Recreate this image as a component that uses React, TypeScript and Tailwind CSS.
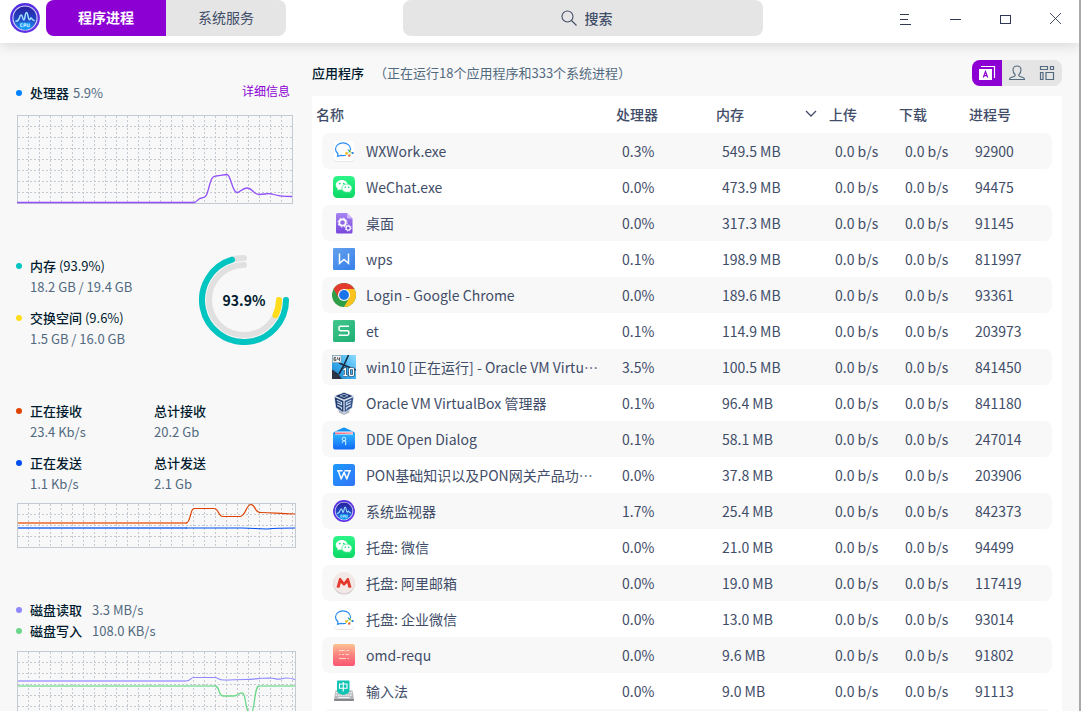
import React from "react";

type IconName =
  | "wxwork" | "wechat" | "desktop" | "wps" | "chrome" | "et" | "win10" | "vbox"
  | "dialog" | "word" | "monitor" | "mail" | "omd" | "ime";

interface Process {
  icon: IconName;
  name: string;
  clipped?: boolean;
  cpu: string;
  memory: string;
  pid: string;
}

const processes: Process[] = [
  { icon: "wxwork", name: "WXWork.exe", cpu: "0.3%", memory: "549.5 MB", pid: "92900" },
  { icon: "wechat", name: "WeChat.exe", cpu: "0.0%", memory: "473.9 MB", pid: "94475" },
  { icon: "desktop", name: "桌面", cpu: "0.0%", memory: "317.3 MB", pid: "91145" },
  { icon: "wps", name: "wps", cpu: "0.1%", memory: "198.9 MB", pid: "811997" },
  { icon: "chrome", name: "Login - Google Chrome", cpu: "0.0%", memory: "189.6 MB", pid: "93361" },
  { icon: "et", name: "et", cpu: "0.1%", memory: "114.9 MB", pid: "203973" },
  { icon: "win10", name: "win10 [正在运行] - Oracle VM Virtu", clipped: true, cpu: "3.5%", memory: "100.5 MB", pid: "841450" },
  { icon: "vbox", name: "Oracle VM VirtualBox 管理器", cpu: "0.1%", memory: "96.4 MB", pid: "841180" },
  { icon: "dialog", name: "DDE Open Dialog", cpu: "0.1%", memory: "58.1 MB", pid: "247014" },
  { icon: "word", name: "PON基础知识以及PON网关产品功", clipped: true, cpu: "0.0%", memory: "37.8 MB", pid: "203906" },
  { icon: "monitor", name: "系统监视器", cpu: "1.7%", memory: "25.4 MB", pid: "842373" },
  { icon: "wechat", name: "托盘: 微信", cpu: "0.0%", memory: "21.0 MB", pid: "94499" },
  { icon: "mail", name: "托盘: 阿里邮箱", cpu: "0.0%", memory: "19.0 MB", pid: "117419" },
  { icon: "wxwork", name: "托盘: 企业微信", cpu: "0.0%", memory: "13.0 MB", pid: "93014" },
  { icon: "omd", name: "omd-requ", cpu: "0.0%", memory: "9.6 MB", pid: "91802" },
  { icon: "ime", name: "输入法", cpu: "0.0%", memory: "9.0 MB", pid: "91113" },
];

function MonitorLogo({ className }: { className: string }) {
  return (
    <svg viewBox="0 0 30 30" className={className} aria-hidden="true">
      <defs>
        <linearGradient id="monitorRing" x2="1" y2="1">
          <stop stopColor="#4a2be0" />
          <stop offset="1" stopColor="#6a35e6" />
        </linearGradient>
        <linearGradient id="monitorFace" x2="0" y2="1">
          <stop stopColor="#2a22a0" />
          <stop offset="0.500" stopColor="#2440c0" />
          <stop offset="1" stopColor="#1f8df0" />
        </linearGradient>
      </defs>
      <circle cx="15" cy="15" r="14.900" fill="url(#monitorRing)" />
      <circle cx="15" cy="15" r="12.600" fill="#d3d3f6" />
      <circle cx="15" cy="15" r="11.500" fill="url(#monitorFace)" />
      <path d="M9.500 19.500h11v5.700a11.500 11.500 0 0 1-11 0z" fill="#149bf5" />
      <path d="M12.600 20.800h-1.800v2.800h1.800M14 24v-3.200h1.800v1.800H14M17.200 20.600v3h2v-3" fill="none" stroke="#d8f1ff" strokeWidth="0.900" />
      <path
        d="M6 18.200c2 0 2.500-.6 3.300-3 .8-2.400 1-3.200 1.900-3.200 1.300 0 1.500 5 2.600 5 1.300 0 1.200-7.400 2.700-7.400 1.400 0 1.700 7.200 2.900 7.200.8 0 .8-1.700 1.600-1.700.9 0 1 2.100 3 2.500"
        fill="none" stroke="#9fe3ff" strokeWidth="1.500" strokeLinecap="round"
      />
    </svg>
  );
}

function AppIcon({ name }: { name: IconName }) {
  if (name === "monitor") return <MonitorLogo className="size-[22px] shrink-0" />;
  return (
    <svg viewBox="0 0 24 24" className="size-6 shrink-0" aria-hidden="true">
      {name === "wxwork" && (
        <>
          <rect x="2" y="3" width="20" height="20" rx="4" fill="#e6e6e6" />
          <rect x="2" y="2" width="20" height="20" rx="4" fill="#fff" />
          <path d="M14 16.200c-1.300.4-3 .5-4.800.1L5.600 17.200l.4-2.400C4.400 13.500 3.500 11.900 3.500 10.100 3.500 6.400 7 3.900 11 3.900s7.500 2.500 7.500 6.100v1" fill="none" stroke="#2a8bf2" strokeWidth="1.200" />
          <path d="M16 10.500l2 2.600" stroke="#2a8bf2" strokeWidth="1.200" />
          <circle cx="17.800" cy="12" r="1" fill="#5bbf2a" />
          <circle cx="20.600" cy="14" r="1.100" fill="#1478e8" />
          <circle cx="14.500" cy="14.500" r="1.400" fill="#f7c325" />
          <circle cx="17.200" cy="16.600" r="1.200" fill="#f1582c" />
          <path d="M18 12.500l2 1.500M15 14.500l1.500-1.500M17.500 16l1.500-1.500" stroke="#8fc55a" strokeWidth="0.900" />
        </>
      )}
      {name === "wechat" && (
        <>
          <defs>
            <linearGradient id="wechatGreen" x2="0" y2="1">
              <stop stopColor="#2df588" />
              <stop offset="1" stopColor="#0cd765" />
            </linearGradient>
          </defs>
          <rect x="1" y="1" width="22" height="22" rx="4.500" fill="url(#wechatGreen)" />
          <path d="M9.800 5c-3.300 0-6 2.200-6 5 0 1.500.8 2.900 2.100 3.800l-.6 1.700 2.200-1.100c.8.200 1.500.3 2.300.3 3.300 0 6-2.100 6-4.800 0-2.700-2.700-4.900-6-4.900z" fill="#fff" />
          <path d="M15 9c-2.900 0-5.200 1.900-5.200 4.200s2.300 4.100 5.200 4.100c.6 0 1.200-.1 1.800-.3l1.700.9-.4-1.500c1.200-.8 1.900-2 1.900-3.200 0-2.300-2.100-4.200-5-4.200z" fill="#fff" stroke="#18e070" strokeWidth="0.600" />
          <g fill="#18de6e">
            <circle cx="7.800" cy="8.600" r="0.900" /><circle cx="11.800" cy="8.600" r="0.900" />
            <circle cx="13.300" cy="12.200" r="0.800" /><circle cx="16.700" cy="12.200" r="0.800" />
          </g>
        </>
      )}
      {name === "desktop" && (
        <>
          <defs>
            <linearGradient id="filePurple" x2="0" y2="1">
              <stop stopColor="#a785f3" />
              <stop offset="1" stopColor="#7747dc" />
            </linearGradient>
          </defs>
          <path d="M5.500 2H15l5.500 5.500V21a1.500 1.500 0 0 1-1.500 1.500H5.500A1.500 1.500 0 0 1 4 21V3.500A1.500 1.500 0 0 1 5.500 2z" fill="url(#filePurple)" />
          <path d="M15 2v4.200q0 1.300 1.300 1.300h4.200z" fill="#cdb8fa" />
          <circle cx="10.500" cy="11.500" r="3.200" fill="none" stroke="#fff" strokeWidth="1.700" />
          <circle cx="10.500" cy="11.500" r="4.500" fill="none" stroke="#fff" strokeWidth="1" strokeDasharray="1.700 1.830" />
          <circle cx="16.200" cy="17" r="2.100" fill="none" stroke="#fff" strokeWidth="1.200" />
          <circle cx="16.200" cy="17" r="3.100" fill="none" stroke="#fff" strokeWidth="0.800" strokeDasharray="1.200 1.230" />
        </>
      )}
      {name === "wps" && (
        <>
          <defs>
            <linearGradient id="wpsBlue" x2="0.600" y2="1">
              <stop stopColor="#64a2ee" />
              <stop offset="1" stopColor="#3c83ea" />
            </linearGradient>
          </defs>
          <rect x="1" y="1" width="22" height="22" rx="1" fill="url(#wpsBlue)" />
          <path d="M7.500 6.500v9.800l4.500-3.800 4.500 3.800V6.500" fill="none" stroke="#fff" strokeWidth="1.500" />
        </>
      )}
      {name === "chrome" && (
        <>
          <circle cx="12" cy="12" r="12" fill="#2f9e49" />
          <path d="M22.390 6A12 12 0 0 1 12 24l5.200-9L12 6z" fill="#fcc31e" />
          <path d="M1.610 6A12 12 0 0 1 22.390 6H12l-5.200 9z" fill="#e33b2e" />
          <circle cx="12" cy="12" r="6" fill="#fff" />
          <circle cx="12" cy="12" r="4.900" fill="#1a73e8" />
        </>
      )}
      {name === "et" && (
        <>
          <defs>
            <linearGradient id="etGreen" x2="0.600" y2="1">
              <stop stopColor="#43c78d" />
              <stop offset="1" stopColor="#22b277" />
            </linearGradient>
          </defs>
          <rect x="1" y="1" width="22" height="22" rx="1.500" fill="url(#etGreen)" />
          <path d="M17 7.200H8.400A1.400 1.400 0 0 0 7 8.600v1.700a1.400 1.400 0 0 0 1.400 1.400h7a1.400 1.400 0 0 1 1.400 1.400v1.700a1.400 1.400 0 0 1-1.400 1.400H6.600" fill="none" stroke="#fff" strokeWidth="1.500" />
        </>
      )}
      {name === "win10" && (
        <>
          <defs>
            <linearGradient id="winBlue" x1="1" x2="0" y2="1">
              <stop stopColor="#8fdcff" />
              <stop offset="0.500" stopColor="#3cb0f0" />
              <stop offset="1" stopColor="#1a7fcc" />
            </linearGradient>
          </defs>
          <rect width="24" height="24" fill="url(#winBlue)" />
          <path d="M0 14.500l6 4 4 5.500H0z" fill="#2a3444" />
          <path d="M16.500 0L12 10M7 8l17 7M12 10l-5 9" stroke="#1d2a3c" strokeWidth="1.600" />
          <rect x="0.500" y="0.500" width="8.500" height="7" fill="#f4f4f4" stroke="#8e979e" strokeWidth="0.600" />
          <path d="M4 2.400H2v3.200h2V4H2M5.500 2.200v2h2.300M7.500 2.200V6" fill="none" stroke="#3c454d" strokeWidth="0.800" />
          <path d="M11.500 14.500l1.800-1v7m-2 0h4M17.500 14.500q0-1 1-1h2q1 0 1 1v5q0 1-1 1h-2q-1 0-1-1z" fill="none" stroke="#1c3a5c" strokeWidth="2.600" />
          <path d="M11.500 14.500l1.800-1v7m-2 0h4M17.500 14.500q0-1 1-1h2q1 0 1 1v5q0 1-1 1h-2q-1 0-1-1z" fill="none" stroke="#fff" strokeWidth="1.300" />
        </>
      )}
      {name === "vbox" && (
        <>
          <path d="M6 18l6 4.500 6-4.500-1 3.500-5 2.500-5-2.500z" fill="#a9aebb" />
          <path d="M2 5L12 1l10 4-1.500 12L12 22.500 3.500 17z" fill="#d9dee8" />
          <path d="M3.500 4.900L12 1.700l8.500 3.200L12 8.500z" fill="#1c3768" />
          <path d="M2.700 6.200L11.400 10v11.300L4.200 16.500z" fill="#1d3a6e" />
          <path d="M21.300 6.200L12.600 10v11.300l7.200-4.800z" fill="#34558c" />
          <path d="M8 4.700l4-1.300 4 1.300-4 1.800z" fill="none" stroke="#a9bcd9" strokeWidth="0.900" />
          <path d="M4.800 9.200l4.700 2.300v2.300l-4.300-2M5.200 14.400l4.300 2.200v2M19.200 9.200l-4.700 2.300v2.300l4.300-2M18.800 14.400l-4.300 2.200v2" fill="none" stroke="#c9d5ea" strokeWidth="1.200" />
        </>
      )}
      {name === "dialog" && (
        <>
          <defs>
            <linearGradient id="dialogBlue" x2="0" y2="1">
              <stop stopColor="#2cb1ff" />
              <stop offset="1" stopColor="#1168f5" />
            </linearGradient>
          </defs>
          <path d="M1 7q0-2 2-2.500L10.500.9q1.500-.6 3 0L21 4.500q2 .5 2 2.500v7H1z" fill="#1593f5" />
          <path d="M3 5.500q0-1 1-1h16q1 0 1 1V8H3z" fill="#f6fbff" />
          <path d="M3 5.500h18v1L3 7.200z" fill="#fb7182" />
          <path d="M1 7.500h22v13a2 2 0 0 1-2 2H3a2 2 0 0 1-2-2z" fill="url(#dialogBlue)" />
          <circle cx="12" cy="12" r="1.800" fill="none" stroke="#d4efff" strokeWidth="1" />
          <path d="M10.200 16q.2-1.800 1.600-2.100l1.900.1v4.200" fill="none" stroke="#d4efff" strokeWidth="1" />
        </>
      )}
      {name === "word" && (
        <>
          <defs>
            <linearGradient id="wordBlue" x2="1" y2="1">
              <stop stopColor="#1c9bff" />
              <stop offset="1" stopColor="#3474f5" />
            </linearGradient>
          </defs>
          <rect x="1" y="1" width="22" height="22" rx="2.500" fill="url(#wordBlue)" />
          <path d="M5 7.700h5.500M6.300 7.700l2.900 8.200 2.900-6.600 2.700 6.600 3-8.200M12.500 7.700h6.500" fill="none" stroke="#fff" strokeWidth="1.500" strokeLinejoin="round" />
        </>
      )}
      {name === "mail" && (
        <>
          <circle cx="12" cy="12.600" r="10.900" fill="#cfc8c8" />
          <circle cx="12" cy="11.800" r="10.700" fill="#f4e8e7" />
          <path d="M4.500 16.500L7.200 7h1.500L12 11.200 15.300 7h1.500l2.700 9.500-3 .2-1.300-4.600L12 15l-3.200-2.900-1.300 4.600z" fill="#e5382c" />
        </>
      )}
      {name === "omd" && (
        <>
          <defs>
            <linearGradient id="omdRed" x2="0" y2="1">
              <stop stopColor="#fcc394" />
              <stop offset="0.500" stopColor="#fb8280" />
              <stop offset="1" stopColor="#fa5572" />
            </linearGradient>
          </defs>
          <rect x="1" y="1" width="22" height="22" rx="2.500" fill="url(#omdRed)" />
          <path d="M7 7.500h6M14.500 7.500h2.500M7 11.500h1.500M10 11.500h2M13.500 11.500h3.500M7 15.500h7M15.500 15.500h1.500" stroke="#ffd2cb" strokeWidth="1.200" />
        </>
      )}
      {name === "ime" && (
        <>
          <path d="M3.500 11.500h17L22 20v1a1 1 0 0 1-1 1H3a1 1 0 0 1-1-1v-1z" fill="#b5b8bc" />
          <path d="M2 20h20v1a1 1 0 0 1-1 1H3a1 1 0 0 1-1-1z" fill="#85888c" />
          <path d="M4 13.700h16M3.600 16.100h16.800" stroke="#f4f5f6" strokeWidth="1.200" strokeDasharray="1.700 .7" />
          <path d="M6 18.500h12" stroke="#f4f5f6" strokeWidth="1.200" />
          <path d="M6 1.500h10.500q1 0 1 1v9q0 2.200-2.500 3.200L11.300 16l-3.800-1.300Q5 13.700 5 11.500v-9q0-1 1-1z" fill="#10c3b2" />
          <path d="M7.500 5h7.500v4.200H7.500zM11.250 3v9.500" fill="none" stroke="#fff" strokeWidth="1.100" />
        </>
      )}
    </svg>
  );
}

function Chart({ id, width, height, label, children }: {
  id: string; width: number; height: number; label: string; children: React.ReactNode;
}) {
  const columns = Array.from({ length: Math.floor((width - 2) / 11) }, (_, i) => (i + 1) * 11 + 0.5);
  const rows = Array.from({ length: Math.floor((height - 2) / 11) }, (_, i) => (i + 1) * 11 + 0.5);
  return (
    <svg id={id} role="img" aria-label={label} width={width} height={height} viewBox={`0 0 ${width} ${height}`} className="ml-[17px] block">
      <g stroke="#c3cad1" strokeDasharray="2 2">
        {columns.map((x) => <line key={x} x1={x} x2={x} y1="1" y2={height} />)}
        {rows.map((y) => <line key={y} x1="1" x2={width} y1={y} y2={y} />)}
      </g>
      <rect x="0.500" y="0.500" width={width - 1} height={height - 1} fill="none" stroke="#c3cad1" />
      {children}
    </svg>
  );
}

function Dot({ className }: { className: string }) {
  return <span className={`size-[6px] shrink-0 rounded-full ${className}`} />;
}

function Stat({ dot, title, detail, value }: { dot?: string; title: string; detail?: string; value: string }) {
  return (
    <div className={dot ? "flex w-[138px] gap-2" : "flex"}>
      {dot && <span className="flex h-[21px] items-center"><Dot className={dot} /></span>}
      <div className="whitespace-nowrap">
        <p className="text-[#001a2e]"><span className="font-medium">{title}</span>{detail && ` ${detail}`}</p>
        <p className="text-[#526a7f]">{value}</p>
      </div>
    </div>
  );
}

function TitleBar() {
  const control = "flex h-[38px] w-[50px] items-center justify-center pl-1";
  return (
    <header className="relative z-10 flex h-[43px] shrink-0 items-start bg-white shadow-[0_2px_14px_rgba(0,0,0,0.14)]">
      <div className="flex h-9 items-center gap-[6px] pl-[10px]">
        <MonitorLogo className="size-[30px]" />
        <nav className="flex h-9 overflow-hidden rounded-lg bg-[#e5e5e5] text-sm">
          <button className="w-[120px] bg-[#8c00d4] pb-[2px] font-bold text-white">程序进程</button>
          <button className="w-[120px] pb-[2px] text-[#414d68]">系统服务</button>
        </nav>
      </div>
      <div className="flex flex-1 justify-center">
        <label className="flex h-9 w-[360px] items-center justify-center gap-2 rounded-lg bg-[#e5e5e5] pl-2">
          <svg width="16" height="16" viewBox="0 0 16 16" fill="none" stroke="#414d68" strokeWidth="1.100" aria-hidden="true">
            <circle cx="6.500" cy="6.500" r="5.500" />
            <path d="M10.500 10.500l5 5" />
          </svg>
          <input type="text" aria-label="搜索" placeholder="搜索" className="field-sizing-content bg-transparent text-sm font-medium text-[#414d68] outline-none placeholder:text-[#414d68]" />
        </label>
      </div>
      <div className="flex text-[#303a55]">
        <button className={control} aria-label="菜单">
          <svg width="12" height="12" viewBox="0 0 12 12" stroke="currentColor" shapeRendering="crispEdges"><path d="M0 1.500h9M0 6.500h8M0 11.500h11" /></svg>
        </button>
        <button className={control} aria-label="最小化">
          <svg width="12" height="12" viewBox="0 0 12 12" stroke="currentColor" shapeRendering="crispEdges"><path d="M0 6.500h11" /></svg>
        </button>
        <button className={control} aria-label="最大化">
          <svg width="12" height="12" viewBox="0 0 12 12" stroke="currentColor" fill="none" shapeRendering="crispEdges"><path d="M.5 2.500h10v8H.5z" /></svg>
        </button>
        <button className={control} aria-label="关闭">
          <svg width="12" height="12" viewBox="1 0 12 12" stroke="currentColor" strokeWidth="0.900" fill="none"><path d="M1 0l11 11M12 0L1 11" /></svg>
        </button>
      </div>
    </header>
  );
}

function Sidebar() {
  return (
    <aside className="w-[296px] shrink-0 pt-[39px] text-[13px] leading-[21px]">
      <section>
        <div className="flex gap-2 pl-4 pr-[6px]">
          <span className="flex h-[21px] items-center"><Dot className="bg-[#0081ff]" /></span>
          <p className="flex flex-1 gap-1 text-[#526a7f]"><span className="font-medium text-[#001a2e]">处理器</span>5.9%</p>
          <a href="#details" className="text-xs leading-[18px] text-[#8c00d4]">详细信息</a>
        </div>
        <div className="mt-3">
          <Chart id="cpu" width={276} height={89} label="处理器">
            <path
              d="M0 87.500H177C180 87.500 181 83 184.500 83C190 82.500 190 79 192 72C195 61 196 61.500 199 61C205 60.500 206 59.500 210 59.500C214 60 215 77 220 77.500C223 77.500 225 73 230 73C236 73 236 79.500 242 79.500C248 79.500 250 78 255 79C260 81 268 81.500 275 81.500"
              fill="none" stroke="#9150fb" strokeWidth="1.300"
            />
          </Chart>
        </div>
      </section>

      <section className="mt-[51px] flex pl-4">
        <div className="flex w-[183px] flex-col gap-[10px]">
          <Stat dot="bg-[#00c5c0]" title="内存" detail="(93.9%)" value="18.2 GB / 19.4 GB" />
          <Stat dot="bg-[#ffdd1a]" title="交换空间" detail="(9.6%)" value="1.5 GB / 16.0 GB" />
        </div>
        <div className="grid size-[90px] place-items-center">
          <svg viewBox="-45 -45 90 90" className="col-start-1 row-start-1 size-[90px]" fill="none" strokeWidth="6" strokeLinecap="round" aria-hidden="true">
            <path d="M42 0A42 42 0 1 1 0-42" stroke="#e0e0e0" />
            <path d="M35 0A35 35 0 1 1 0-35" stroke="#e0e0e0" />
            <path d="M42 0A42 42 0 1 1-11.930-40.270" stroke="#00c5c0" />
            <path d="M35 0A35 35 0 0 1 31.480 15.300" stroke="#ffdd1a" />
          </svg>
          <span className="col-start-1 row-start-1 text-sm font-bold text-[#001a2e]">93.9%</span>
        </div>
      </section>

      <section className="mt-[51px]">
        <div className="flex flex-col gap-[10px] pl-4">
          <div className="flex">
            <Stat dot="bg-[#e04300]" title="正在接收" value="23.4 Kb/s" />
            <Stat title="总计接收" value="20.2 Gb" />
          </div>
          <div className="flex">
            <Stat dot="bg-[#004ef0]" title="正在发送" value="1.1 Kb/s" />
            <Stat title="总计发送" value="2.1 Gb" />
          </div>
        </div>
        <div className="mt-[9px]">
          <Chart id="network" width={279} height={45} label="网络">
            <path d="M1 20H170" stroke="#f08a5c" strokeWidth="2" />
            <path
              d="M169 20C174 20 173 5.500 177 5.500H197C202 5.500 201 13.500 206 13.500H223C229 13 229 1.500 234 1.500C239 2 237 9.500 244 9.500C258 9.500 260 11 278 11"
              fill="none" stroke="#e04300" strokeWidth="1.200"
            />
            <path d="M1 25H170" stroke="#5b8cf5" strokeWidth="2" />
            <path d="M169 25H225C240 25 236 26 250 26C260 25 262 25 278 25" fill="none" stroke="#004ef0" strokeWidth="1.200" />
          </Chart>
        </div>
      </section>

      <section className="mt-[51px]">
        <div className="flex items-center gap-2 pl-4">
          <Dot className="bg-[#8f88ff]" />
          <p className="flex gap-[10px] text-[#526a7f]"><span className="font-medium text-[#001a2e]">磁盘读取</span>3.3 MB/s</p>
        </div>
        <div className="flex items-center gap-2 pl-4">
          <Dot className="bg-[#6bd78a]" />
          <p className="flex gap-[10px] text-[#526a7f]"><span className="font-medium text-[#001a2e]">磁盘写入</span>108.0 KB/s</p>
        </div>
        <div className="mt-[10px]">
          <Chart id="disk" width={279} height={89} label="磁盘">
            <path d="M1 30H169" stroke="#b9b4ff" strokeWidth="2" />
            <path
              d="M169 30C174 30 173 26.500 177 26.500H197C202 26.500 201 29 207 29C215 29 220 28.500 228 28.500C238 28.500 240 27 252 27C260 27.500 259 28.500 264 28C268 26.500 272 26.500 278 28.500"
              fill="none" stroke="#8f88ff" strokeWidth="1.200"
            />
            <path d="M1 35H198M242 35H278" stroke="#a3e6b6" strokeWidth="2" />
            <path
              d="M198 35C203 35 201 45 206 45H216C222 45 220 42 225 42C230 42 227 62 234 62C238 62 237 35 242 35"
              fill="none" stroke="#6bd78a" strokeWidth="1.300"
            />
          </Chart>
        </div>
      </section>
    </aside>
  );
}

function ViewSwitch() {
  const option = "flex w-[30px] items-center justify-center";
  return (
    <div className="flex h-[26px] overflow-hidden rounded-lg bg-[#e5e5e5]">
      <button className={`${option} bg-[#8c00d4]`} aria-label="应用程序">
        <svg width="18" height="16" viewBox="0 0 18 16" fill="none">
          <path d="M3 1.500h13.500V13" stroke="#fff" strokeWidth="1.200" />
          <path d="M1 4h13v11H1z" fill="#fff" />
          <path d="M5.300 12.500L7.500 6.500l2.200 6M6 10.700h3" stroke="#8c00d4" strokeWidth="1.200" />
        </svg>
      </button>
      <button className={option} aria-label="我的进程">
        <svg width="18" height="16" viewBox="0 0 18 16" fill="none" stroke="#526a7f" strokeWidth="1.100">
          <path d="M7 9.500C5.700 8.300 5 6.800 5 5 5 2.600 6.500 1 9 1s4 1.600 4 4c0 1.800-.7 3.300-2 4.500-.5 1 0 1.600 1 2l3 1q1.500.6 1.500 2H1.500q0-1.400 1.500-2l3-1c1-.4 1.500-1 1-2z" />
        </svg>
      </button>
      <button className={option} aria-label="全部进程">
        <svg width="16" height="16" viewBox="0 0 16 16" fill="none" stroke="#526a7f" strokeWidth="1.200">
          <path d="M1.500 1.500h7v3h-7zM11.500 1.500h3v3h-3zM1.500 7.500h2.500v7H1.500zM7 7.500h7.500v7H7z" />
        </svg>
      </button>
    </div>
  );
}

function ProcessTable() {
  return (
    <table className="w-full table-fixed border-collapse whitespace-nowrap text-left text-sm leading-[36px] text-[#414d68]">
      <colgroup>
        <col />
        <col className="w-[100px]" />
        <col className="w-[113px]" />
        <col className="w-[70px]" />
        <col className="w-[70px]" />
        <col className="w-[97px]" />
      </colgroup>
      <thead>
        <tr className="h-[37px] align-top [&>th]:p-0 [&>th]:pl-1 [&>th]:font-medium">
          <th>名称</th>
          <th>处理器</th>
          <th>
            <div className="flex items-center justify-between pr-2">
              内存
              <svg width="12" height="8" viewBox="0 0 12 8" fill="none" stroke="#414d68" strokeWidth="1.300" aria-hidden="true"><path d="M1 1l5 5 5-5" /></svg>
            </div>
          </th>
          <th>上传</th>
          <th>下载</th>
          <th>进程号</th>
        </tr>
      </thead>
      <tbody>
        {processes.map((p) => (
          <tr key={p.pid} className="group [&>td]:p-0">
            <td>
              <div className="ml-[10px] flex h-9 items-center rounded-l-lg pl-[10px] group-odd:bg-[#f8f8f8]">
                <span className="mr-[10px] flex w-6 shrink-0 justify-center"><AppIcon name={p.icon} /></span>
                <span>{p.name}</span>
                {p.clipped && <span>⋯</span>}
              </div>
            </td>
            <td><div className="h-9 pl-[10px] group-odd:bg-[#f8f8f8]">{p.cpu}</div></td>
            <td><div className="h-9 pl-[10px] group-odd:bg-[#f8f8f8]">{p.memory}</div></td>
            <td><div className="h-9 pl-[10px] group-odd:bg-[#f8f8f8]">0.0 b/s</div></td>
            <td><div className="h-9 pl-[10px] group-odd:bg-[#f8f8f8]">0.0 b/s</div></td>
            <td><div className="mr-[10px] h-9 rounded-r-lg pl-[10px] group-odd:bg-[#f8f8f8]">{p.pid}</div></td>
          </tr>
        ))}
      </tbody>
      <tfoot>
        <tr>
          <td colSpan={6} className="p-0"><div className="mx-[10px] h-9 rounded-lg bg-[#f8f8f8]" /></td>
        </tr>
      </tfoot>
    </table>
  );
}

export default function App() {
  return (
    <div lang="zh-CN" className="flex h-screen overflow-hidden border-r-2 border-[#a9a9a9] bg-[#f8f8f8] font-['Noto_Sans_CJK_SC',sans-serif]">
      <div className="flex min-w-0 flex-1 flex-col">
        <TitleBar />
        <div className="flex min-h-0 flex-1 gap-4">
          <Sidebar />
          <main className="mr-[17px] flex min-w-0 flex-1 flex-col pt-[17px]">
            <div className="flex h-[36px] items-start justify-between">
              <h1 className="flex gap-[10px] text-[13px] leading-[25px] text-[#526a7f]">
                <span className="font-medium text-[#001a2e]">应用程序</span>
                （正在运行18个应用程序和333个系统进程）
              </h1>
              <ViewSwitch />
            </div>
            <div className="min-h-0 flex-1 overflow-hidden bg-white">
              <ProcessTable />
            </div>
          </main>
        </div>
      </div>
    </div>
  );
}
